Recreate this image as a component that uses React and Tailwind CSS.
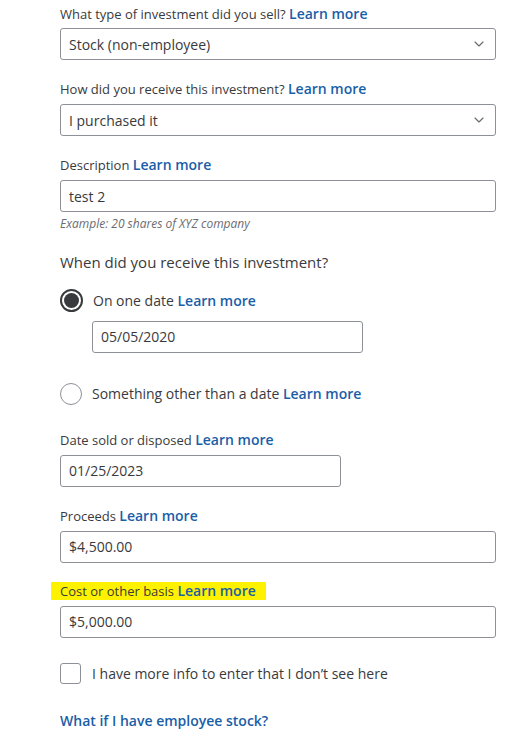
import { ChevronDown } from "lucide-react";

const font = { fontFamily: '"Open Sans", "Noto Sans", sans-serif' };

function Learn() {
  return <span className="text-[14px] font-semibold text-[#1a5ea8]">Learn more</span>;
}

function Label({ children, highlight }) {
  return (
    <div className={"text-[13px] text-[#393a3d] leading-[18px] " + (highlight ? "bg-[#fff200] -ml-[9px] pl-[9px] pr-[10px] w-fit" : "")}>
      {children} <Learn />
    </div>
  );
}

function Field({ value, width = "w-full", select }) {
  return (
    <div className={`${width} h-[32px] border border-[#8d9096] rounded-[3px] flex items-center justify-between px-[8px] text-[14px] text-[#393a3d]`}>
      <span>{value}</span>
      {select && <ChevronDown className="w-[16px] h-[16px] text-[#6b6c72]" strokeWidth={1.75} />}
    </div>
  );
}

export default function App() {
  return (
    <div className="bg-white w-[515px] h-[746px] overflow-hidden" style={font}>
      <div className="pl-[60px] pr-[19px] pt-[5px] flex flex-col">
        <Label>What type of investment did you sell?</Label>
        <div className="mt-[5px]"><Field value="Stock (non-employee)" select /></div>

        <div className="mt-[20px]"><Label>How did you receive this investment?</Label></div>
        <div className="mt-[6px]"><Field value="I purchased it" select /></div>

        <div className="mt-[20px]"><Label>Description</Label></div>
        <div className="mt-[6px]"><Field value="test 2" /></div>
        <div className="mt-[3px] text-[12px] italic text-[#6b6c72]">Example: 20 shares of XYZ company</div>

        <div className="mt-[18px] text-[15px] text-[#393a3d]">When did you receive this investment?</div>

        <div className="mt-[15px] flex items-center gap-[10px]">
          <div className="w-[23px] h-[23px] rounded-full border-2 border-[#393a3d] flex items-center justify-center">
            <div className="w-[15px] h-[15px] rounded-full bg-[#393a3d]" />
          </div>
          <div className="text-[14px] text-[#393a3d]">On one date <Learn /></div>
        </div>
        <div className="mt-[9px] pl-[32px]"><Field value="05/05/2020" width="w-[271px]" /></div>

        <div className="mt-[30px] flex items-center gap-[10px]">
          <div className="w-[22px] h-[22px] rounded-full border border-[#8d9096]" />
          <div className="text-[14px] text-[#393a3d]">Something other than a date <Learn /></div>
        </div>

        <div className="mt-[26px]"><Label>Date sold or disposed</Label></div>
        <div className="mt-[6px]"><Field value="01/25/2023" width="w-[281px]" /></div>

        <div className="mt-[20px]"><Label>Proceeds</Label></div>
        <div className="mt-[6px]"><Field value="$4,500.00" /></div>

        <div className="mt-[19px]"><Label highlight>Cost or other basis</Label></div>
        <div className="mt-[6px]"><Field value="$5,000.00" /></div>

        <div className="mt-[25px] flex items-center gap-[11px]">
          <div className="w-[21px] h-[21px] rounded-[3px] border border-[#8d9096]" />
          <div className="text-[14px] text-[#393a3d]">I have more info to enter that I don’t see here</div>
        </div>

        <div className="mt-[26px] text-[14px] font-semibold text-[#1a5ea8]">What if I have employee stock?</div>
      </div>
    </div>
  );
}
